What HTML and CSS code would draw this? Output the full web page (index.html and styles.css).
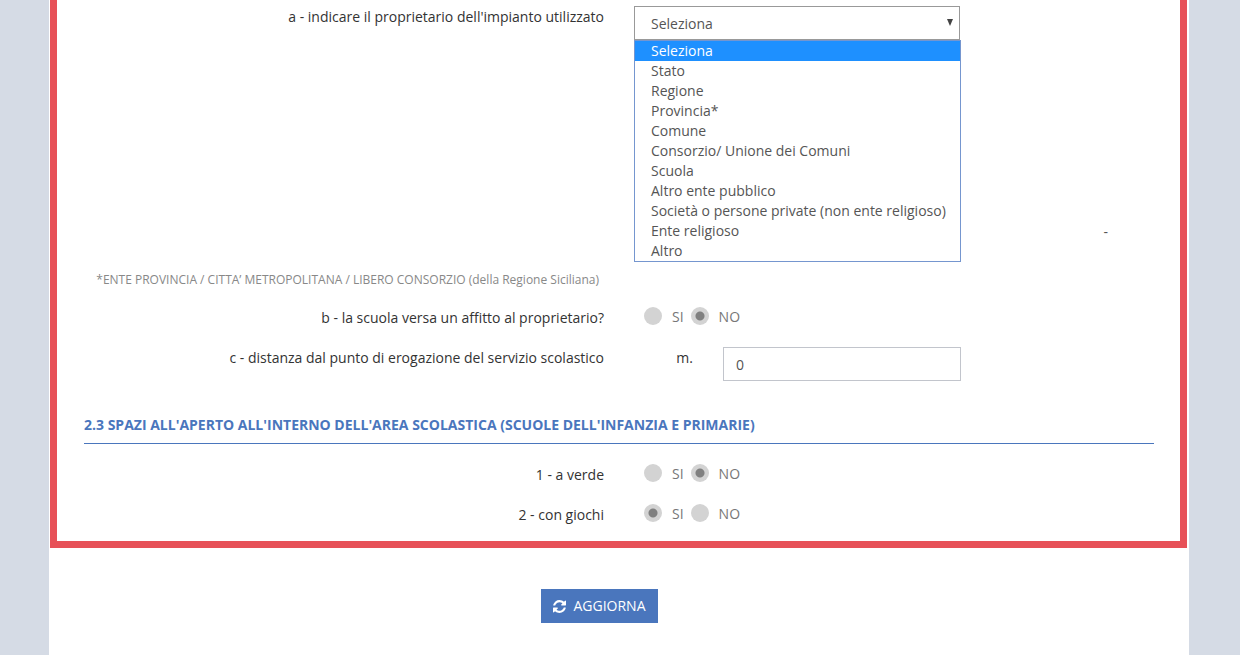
FILE: index.html
```html
<!DOCTYPE html>
<html lang="it">
  <head>
    <meta charset="UTF-8" />
    <meta name="viewport" content="width=device-width, initial-scale=1.0" />
    <title>Impianti e spazi</title>
    <link rel="stylesheet" href="styles.css">
  </head>
  <body>
    <form class="page" action="#" method="POST">
      <div class="section">
        <div class="row">
          <label class="label" for="proprietario">a - indicare il proprietario dell'impianto utilizzato</label>
          <div class="field">
            <div class="select-wrap">
              <select id="proprietario" name="proprietario">
                <option selected>Seleziona</option>
                <option>Stato</option>
                <option>Regione</option>
                <option>Provincia*</option>
                <option>Comune</option>
                <option>Consorzio/ Unione dei Comuni</option>
                <option>Scuola</option>
                <option>Altro ente pubblico</option>
                <option>Società o persone private (non ente religioso)</option>
                <option>Ente religioso</option>
                <option>Altro</option>
              </select>
              <svg class="arrow" viewBox="0 0 6 7" aria-hidden="true"><path d="M0 0h6L3 7z" /></svg>
            </div>
            <ul class="options" role="listbox" aria-label="Proprietario">
              <li class="active" role="option" aria-selected="true">Seleziona</li>
              <li role="option">Stato</li>
              <li role="option">Regione</li>
              <li role="option">Provincia*</li>
              <li role="option">Comune</li>
              <li role="option">Consorzio/ Unione dei Comuni</li>
              <li role="option">Scuola</li>
              <li role="option">Altro ente pubblico</li>
              <li role="option">Società o persone private (non ente religioso)</li>
              <li role="option">Ente religioso</li>
              <li role="option">Altro</li>
            </ul>
          </div>
          <span class="extra">-</span>
        </div>

        <p class="note">*ENTE PROVINCIA / CITTA’ METROPOLITANA / LIBERO CONSORZIO (della Regione Siciliana)</p>

        <div class="row">
          <span class="label" id="affitto-label">b - la scuola versa un affitto al proprietario?</span>
          <div class="radios" role="radiogroup" aria-labelledby="affitto-label">
            <label><input type="radio" name="affitto" value="si" />SI</label>
            <label><input type="radio" name="affitto" value="no" checked />NO</label>
          </div>
        </div>

        <div class="row">
          <label class="label" for="distanza">c - distanza dal punto di erogazione del servizio scolastico</label>
          <div class="distance">
            <span class="label">m.</span>
            <input type="text" id="distanza" name="distanza" value="0" />
          </div>
        </div>

        <h2>2.3 SPAZI ALL'APERTO ALL'INTERNO DELL'AREA SCOLASTICA (SCUOLE DELL'INFANZIA E PRIMARIE)</h2>

        <div class="row">
          <span class="label" id="verde-label">1 - a verde</span>
          <div class="radios" role="radiogroup" aria-labelledby="verde-label">
            <label><input type="radio" name="verde" value="si" />SI</label>
            <label><input type="radio" name="verde" value="no" checked />NO</label>
          </div>
        </div>

        <div class="row">
          <span class="label" id="giochi-label">2 - con giochi</span>
          <div class="radios" role="radiogroup" aria-labelledby="giochi-label">
            <label><input type="radio" name="giochi" value="si" checked />SI</label>
            <label><input type="radio" name="giochi" value="no" />NO</label>
          </div>
        </div>
      </div>

      <div class="actions">
        <button type="submit">
          <svg viewBox="0 0 1536 1536" aria-hidden="true">
            <path d="M1511 928q0 5-1 7-64 268-268 434.500T764 1536q-146 0-282.500-55T238 1324l-129 129q-19 19-45 19t-45-19-19-45V960q0-26 19-45t45-19h448q26 0 45 19t19 45-19 45l-137 137q71 66 161 102t187 36q134 0 250-65t186-179q11-17 53-117 8-23 30-23h192q13 0 22.500 9.500t9.500 22.500zm25-800v448q0 26-19 45t-45 19h-448q-26 0-45-19t-19-45 19-45l138-138Q969 256 768 256q-134 0-250 65T332 500q-11 17-53 117-8 23-30 23H50q-13 0-22.500-9.500T18 608v-7q65-268 270-434.500T768 0q146 0 284 55.500T1297 212l130-129q19-19 45-19t45 19 19 45z" />
          </svg>
          AGGIORNA
        </button>
      </div>
    </form>
  </body>
</html>
```
FILE: styles.css
```css
* {
  box-sizing: border-box;
}
body {
  margin: 0;
  background-color: #d5dbe5;
  color: #333;
  font-family: "Open Sans", Arial, sans-serif;
  font-size: 14px;
  line-height: 20px;
}
.page {
  min-height: 100vh;
  margin: 0 51px 0 49px;
  padding: 0 2px 0 1px;
  background-color: #fff;
}

/* red box */
.section {
  display: flex;
  flex-direction: column;
  gap: 6px;
  padding: 6px 26px 3px 27px;
  border: 7px solid #e75158;
  border-top: none;
}
.row {
  display: grid;
  grid-template-columns: 520fr 327fr 163fr;
  column-gap: 30px;
  min-height: 34px;
}
.label {
  padding-top: 1px;
  text-align: right;
}
.note {
  width: 50%;
  margin: 0;
  padding: 2px 20px 11px 0;
  color: #888;
  font-size: 12px;
  text-align: right;
}
.extra {
  align-self: end;
  padding: 0 46px 20px 0;
  color: #555;
  text-align: right;
}
h2 {
  margin: 28px 0 14px;
  padding-bottom: 8px;
  border-bottom: 1px solid #4a76bd;
  color: #4a76bd;
  font-size: 14px;
  line-height: 20px;
}

/* fields */
select,
input[type="text"] {
  width: 100%;
  height: 34px;
  border: 1px solid #c2c5cc;
  border-radius: 0;
  background-color: #fff;
  color: #555;
  font: inherit;
}
.select-wrap {
  position: relative;
  margin-right: 1px;
}
select {
  display: block;
  padding: 2px 16px 0;
  border-color: #999;
  appearance: none;
}
.arrow {
  position: absolute;
  top: 13px;
  right: 7px;
  width: 6px;
  height: 7px;
  fill: #444;
}
.options {
  margin: 0;
  padding: 0;
  border: 1px solid #7596cf;
  color: #555;
  list-style: none;
}
.options li {
  padding-left: 16px;
  white-space: nowrap;
}
.options .active {
  background-color: #1e90ff;
  color: #fff;
}
.distance {
  display: grid;
  grid-template-columns: 59px 1fr;
  column-gap: 30px;
}
input[type="text"] {
  padding: 0 12px;
}

.radios {
  display: flex;
  align-items: flex-start;
  gap: 7px;
  padding-left: 10px;
  color: #777;
}
.radios label {
  display: flex;
  gap: 10px;
}
input[type="radio"] {
  width: 18px;
  height: 18px;
  margin: 0;
  border-radius: 50%;
  background-color: #d3d3d3;
  appearance: none;
}
input[type="radio"]:checked {
  background-image: radial-gradient(circle, #808080 4px, transparent 5px);
}

.actions {
  display: flex;
  justify-content: center;
  padding: 41px 38px 32px 0;
}
button {
  display: flex;
  align-items: center;
  gap: 7px;
  height: 34px;
  padding: 0 12px;
  border: none;
  background-color: #4a76bd;
  color: #fff;
  font: inherit;
  cursor: pointer;
}
button svg {
  width: 13px;
  height: 13px;
  fill: #fff;
}
```
